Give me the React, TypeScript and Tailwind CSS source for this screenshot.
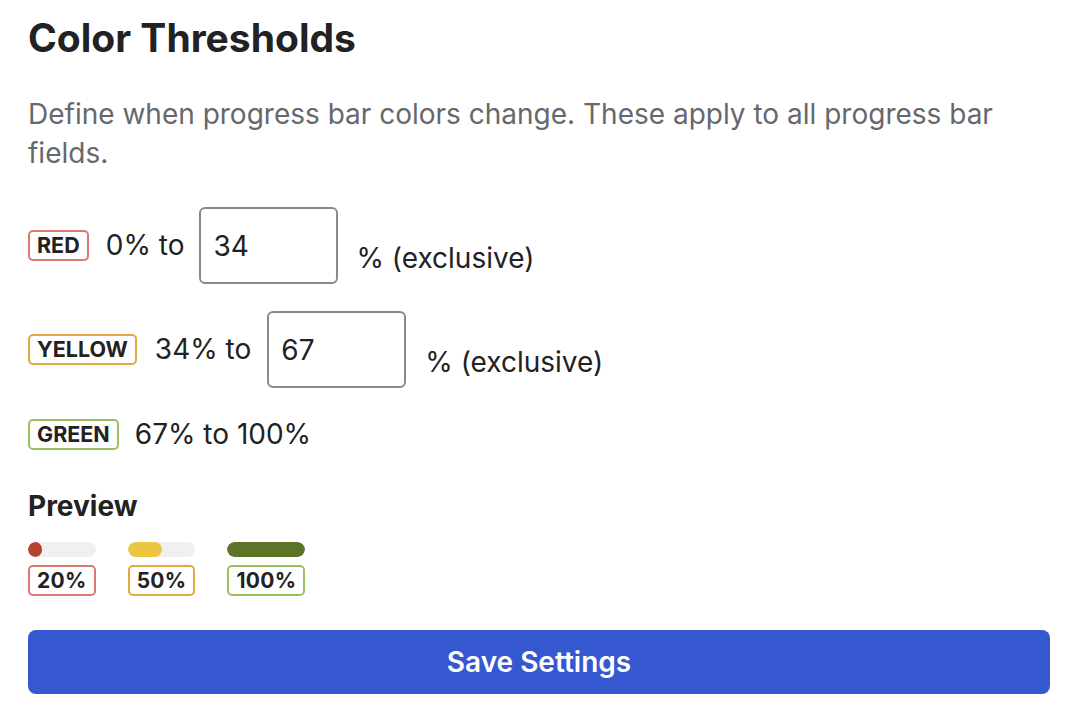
import React from "react";

function Badge({ label, border }: { label: string; border: string }) {
  return (
    <span
      className={`inline-flex h-[31px] items-center rounded-[5px] border-2 bg-white px-[7px] text-[21.5px] font-bold leading-none text-[#222222] ${border}`}
    >
      {label}
    </span>
  );
}

function PreviewItem({
  pct,
  fill,
  border,
}: {
  pct: number;
  fill: string;
  border: string;
}) {
  return (
    <div className="flex flex-col gap-[8px]">
      <div className="h-[15px] w-full overflow-hidden rounded-full bg-[#f0f0f0]">
        <div className={`h-full rounded-full ${fill}`} style={{ width: `${pct}%` }} />
      </div>
      <span
        className={`inline-flex h-[31px] items-center rounded-[5px] border-2 bg-white px-[7px] text-[21px] font-bold leading-none tracking-[0.3px] text-[#222222] ${border}`}
      >
        {pct}%
      </span>
    </div>
  );
}

export default function App() {
  return (
    <div
      className="min-h-[716px] w-[1078px] bg-white px-[28px] pt-[14px] text-[#222222]"
      style={{ fontFamily: "Inter, 'Noto Sans', sans-serif" }}
    >
      <h1 className="text-[39px] font-bold leading-[48px] text-[#222222]">Color Thresholds</h1>
      <p className="mt-[33px] text-[28px] leading-[39px] text-[#66686d]">
        Define when progress bar colors change. These apply to all progress bar fields.
      </p>

      <div className="mt-[34px] flex flex-col gap-[27px] text-[28px] leading-[39px]">
        <div className="flex items-center">
          <Badge label="RED" border="border-[#d97a6c]" />
          <span className="ml-[17px]">0% to</span>
          <input
            readOnly
            value="34"
            className="ml-[15px] h-[77px] w-[139px] rounded-[6px] border-2 border-[#8a8a8e] bg-white px-[12px] text-[28px] text-[#222222] outline-none"
          />
          <span className="ml-[18px] mt-[26px]">% (exclusive)</span>
        </div>
        <div className="flex items-center">
          <Badge label="YELLOW" border="border-[#e2a93c]" />
          <span className="ml-[18px]">34% to</span>
          <input
            readOnly
            value="67"
            className="ml-[16px] h-[77px] w-[139px] rounded-[6px] border-2 border-[#8a8a8e] bg-white px-[12px] text-[28px] text-[#222222] outline-none"
          />
          <span className="ml-[19px] mt-[26px]">% (exclusive)</span>
        </div>
        <div className="flex h-[39px] items-center">
          <Badge label="GREEN" border="border-[#9dc05f]" />
          <span className="ml-[16px]">67% to 100%</span>
        </div>
      </div>

      <h2 className="mt-[31px] text-[28px] font-bold leading-[42px] text-[#222222]">Preview</h2>
      <div className="mt-[15px] flex items-start gap-[32px]">
        <PreviewItem pct={20} fill="bg-[#b4432f]" border="border-[#d97a6c]" />
        <PreviewItem pct={50} fill="bg-[#ecc640]" border="border-[#e2a93c]" />
        <PreviewItem pct={100} fill="bg-[#5b7427]" border="border-[#9dc05f]" />
      </div>

      <button className="mt-[34px] flex h-[64px] w-full items-center justify-center rounded-[8px] bg-[#3558d1] text-[28px] font-semibold text-white">
        Save Settings
      </button>
    </div>
  );
}
